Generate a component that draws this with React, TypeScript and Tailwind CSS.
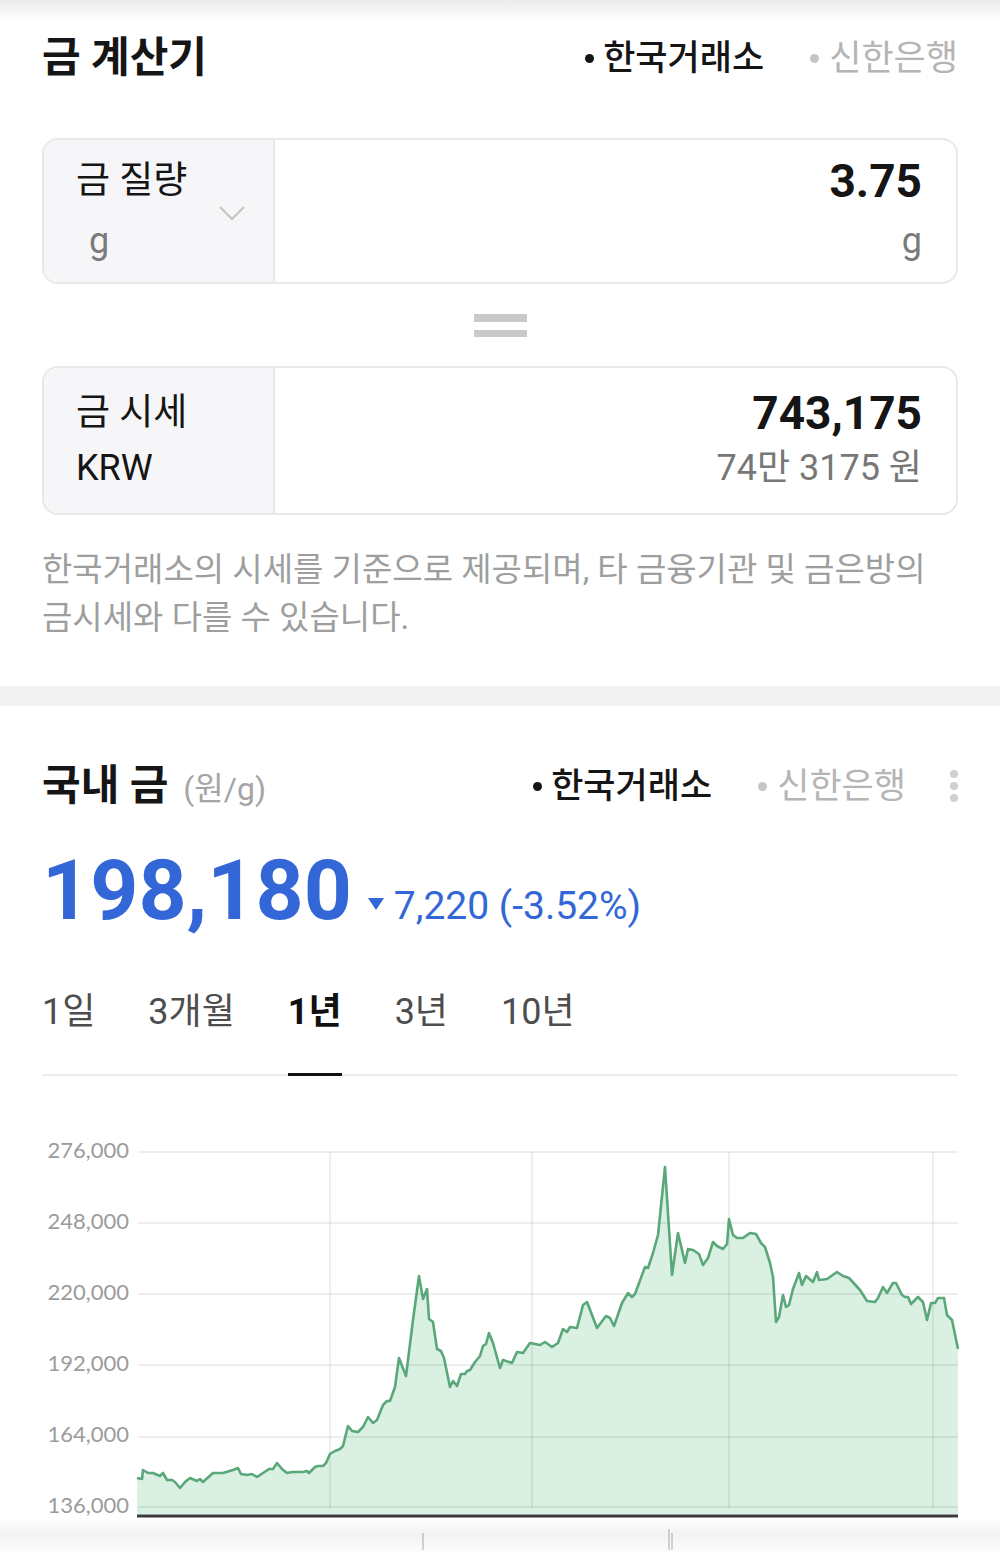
import React from 'react'

// price history, traced in page coordinates (x, y)
const pts: number[] = [
  137, 1478, 142, 1479, 143, 1470, 148, 1473, 153, 1473, 160, 1476, 163, 1473, 167, 1480, 172, 1480, 175, 1482,
  180, 1488, 185, 1482, 190, 1478, 197, 1481, 200, 1479, 203, 1482, 213, 1473, 217, 1473, 223, 1473, 233, 1470,
  238, 1468, 241, 1474, 247, 1475, 252, 1474, 257, 1477, 263, 1473, 269, 1469, 273, 1469, 277, 1463, 282, 1469,
  287, 1473, 292, 1472, 303, 1472, 307, 1471, 309, 1473, 315, 1467, 318, 1466, 323, 1466, 326, 1463, 330, 1454,
  335, 1451, 340, 1449, 343, 1446, 348, 1426, 352, 1431, 358, 1432, 363, 1427, 368, 1417, 373, 1423, 377, 1420,
  383, 1405, 387, 1401, 390, 1401, 395, 1387, 399, 1358, 406, 1376, 413, 1320, 419, 1276, 423, 1299, 427, 1289,
  429, 1319, 433, 1322, 437, 1349, 441, 1351, 444, 1358, 450, 1387, 453, 1381, 457, 1386, 461, 1374, 465, 1374,
  467, 1371, 470, 1370, 475, 1362, 480, 1356, 483, 1346, 486, 1344, 489, 1333, 493, 1343, 500, 1368, 503, 1360,
  512, 1363, 517, 1352, 523, 1353, 530, 1343, 540, 1345, 545, 1342, 552, 1347, 558, 1343, 563, 1329, 567, 1332,
  570, 1327, 577, 1328, 583, 1305, 587, 1302, 597, 1328, 606, 1316, 610, 1318, 614, 1326, 622, 1303, 628, 1293,
  632, 1297, 635, 1294, 645, 1267, 648, 1268, 653, 1253, 658, 1235, 665, 1167, 672, 1275, 678, 1233, 685, 1263,
  688, 1249, 693, 1250, 699, 1254, 703, 1265, 708, 1258, 713, 1242, 717, 1246, 723, 1249, 727, 1244, 729, 1219,
  733, 1235, 737, 1238, 743, 1238, 750, 1233, 756, 1234, 761, 1243, 765, 1247, 770, 1263, 773, 1277, 776, 1322,
  779, 1317, 783, 1295, 786, 1307, 789, 1305, 793, 1289, 799, 1273, 802, 1285, 806, 1276, 813, 1282, 817, 1272,
  819, 1280, 827, 1279, 837, 1272, 843, 1276, 849, 1278, 860, 1290, 867, 1301, 875, 1302, 878, 1298, 883, 1287,
  887, 1293, 893, 1283, 896, 1283, 902, 1295, 905, 1297, 908, 1297, 911, 1304, 918, 1297, 923, 1302, 927, 1320,
  931, 1303, 935, 1303, 938, 1298, 944, 1298, 947, 1315, 952, 1320, 958, 1349,
]

const line = pts.reduce((s, v, i) => s + (i % 2 === 0 ? (i === 0 ? 'M' : ' L') + v : ',' + v), '')
const area = `${line} L958,1514 L137,1514 Z`

const yLabels = [
  ['276,000', 1152],
  ['248,000', 1223],
  ['220,000', 1294],
  ['192,000', 1365],
  ['164,000', 1436],
  ['136,000', 1507],
] as const

const SourceToggle = () => (
  <div className="flex items-center gap-[46px] text-[35px] leading-none">
    <span className="flex items-center gap-[9px] font-medium text-[#151515]">
      <span className="w-[9px] h-[9px] rounded-full bg-[#151515]" />
      한국거래소
    </span>
    <span className="flex items-center gap-[10px] text-[#b5b5b5]">
      <span className="w-[9px] h-[9px] rounded-full bg-[#c6c6c6]" />
      신한은행
    </span>
  </div>
)

const GoldChart = () => (
  <svg width="1000" height="476" viewBox="0 1076 1000 476" className="block">
    <defs>
      <linearGradient id="bottomFade" x1="0" y1="0" x2="0" y2="1">
        <stop offset="0" stopColor="#ffffff" />
        <stop offset="0.45" stopColor="#f2f2f2" />
        <stop offset="1" stopColor="#fbfbfb" />
      </linearGradient>
    </defs>
    <rect x="0" y="1519" width="1000" height="33" fill="url(#bottomFade)" />
    {yLabels.map(([t, y]) => (
      <text
        key={t}
        x="129"
        y={y}
        textAnchor="end"
        dominantBaseline="middle"
        fontFamily="Lato, 'Open Sans', sans-serif"
        fontSize="22"
        fill="#9b9b9b"
      >
        {t}
      </text>
    ))}
    <path d={area} fill="#d9f0e3" />
    {[1152, 1223, 1294, 1365, 1437, 1507].map(y => (
      <line key={y} x1="138" x2="958" y1={y} y2={y} stroke="#000" strokeOpacity="0.09" strokeWidth="1.5" />
    ))}
    {[330, 532, 729, 933].map(x => (
      <line key={x} x1={x} x2={x} y1="1152" y2="1508" stroke="#000" strokeOpacity="0.09" strokeWidth="1.5" />
    ))}
    <path d={line} fill="none" stroke="#5aa87a" strokeWidth="2.6" strokeLinejoin="round" />
    <line x1="137" x2="958" y1="1516" y2="1516" stroke="#3a3a3a" strokeWidth="3" />
    <line x1="423" x2="423" y1="1533" y2="1550" stroke="#a8a8a8" strokeWidth="1" />
    <line x1="669" x2="669" y1="1529" y2="1550" stroke="#a8a8a8" strokeWidth="1" />
    <line x1="672" x2="672" y1="1533" y2="1550" stroke="#a8a8a8" strokeWidth="1" />
  </svg>
)

const tabs = ['1일', '3개월', '1년', '3년', '10년']

export default function App() {
  return (
    <div className="w-[1000px] h-[1552px] overflow-hidden bg-white text-[#151515] font-[Roboto,'Noto_Sans_CJK_KR',sans-serif]">
      <div className="h-[22px] bg-linear-to-b from-[#ebebeb] to-white" />

      {/* 금 계산기 */}
      <div className="px-[42px]">
        <div className="mt-[8px] h-[56px] flex items-center justify-between">
          <h1 className="text-[42px] font-bold leading-none">금 계산기</h1>
          <SourceToggle />
        </div>

        <div className="mt-[52px] h-[146px] flex rounded-[16px] border-2 border-[#e8e8ea] overflow-hidden">
          <div className="w-[231px] flex items-center justify-between pl-[32px] pr-[28px] bg-[#f6f6f8] border-r-2 border-[#e8e8ea]">
            <div className="flex flex-col gap-[16px]">
              <span className="text-[37px] leading-[44px]">금 질량</span>
              <span className="pl-[13px] text-[36px] leading-[44px] text-[#7a7a7a]">g</span>
            </div>
            <svg width="26" height="15" viewBox="0 0 26 15" className="mt-[4px]">
              <polyline points="1,1 13,13 25,1" fill="none" stroke="#c2c2c2" strokeWidth="2" />
            </svg>
          </div>
          <div className="flex-1 flex flex-col items-end justify-center gap-[16px] pr-[34px]">
            <span className="text-[46px] leading-[44px] font-bold">3.75</span>
            <span className="text-[36px] leading-[44px] text-[#7a7a7a]">g</span>
          </div>
        </div>

        <div className="h-[82px] flex flex-col items-center justify-center gap-[8px]">
          <div className="w-[53px] h-[8px] bg-[#c9c9c9]" />
          <div className="w-[53px] h-[7px] bg-[#c9c9c9]" />
        </div>

        <div className="h-[149px] flex rounded-[16px] border-2 border-[#e8e8ea] overflow-hidden">
          <div className="w-[231px] flex flex-col justify-center gap-[11px] pl-[32px] bg-[#f6f6f8] border-r-2 border-[#e8e8ea]">
            <span className="text-[37px] leading-[44px]">금 시세</span>
            <span className="text-[36px] leading-[44px]">KRW</span>
          </div>
          <div className="flex-1 flex flex-col items-end justify-center gap-[11px] pr-[34px]">
            <span className="text-[46px] leading-[44px] font-bold">743,175</span>
            <span className="text-[36px] leading-[44px] text-[#777]">74만 3175 원</span>
          </div>
        </div>

        <p className="mt-[31px] pb-[44px] text-[33px] leading-[48px] text-[#9e9e9e] whitespace-nowrap">
          한국거래소의 시세를 기준으로 제공되며, 타 금융기관 및 금은방의
          <br />
          금시세와 다를 수 있습니다.
        </p>
      </div>

      <div className="h-[20px] bg-[#f2f2f3]" />

      {/* 국내 금 */}
      <div className="px-[42px]">
        <div className="mt-[52px] h-[56px] flex items-center justify-between">
          <div className="flex items-baseline gap-[15px]">
            <h2 className="text-[42px] font-bold leading-none">국내 금</h2>
            <span className="text-[32px] leading-none text-[#a5a5a5]">(원/g)</span>
          </div>
          <div className="flex items-center gap-[44px]">
            <SourceToggle />
            <div className="flex flex-col gap-[4px]">
              <span className="w-[8px] h-[8px] rounded-full bg-[#cfcfcf]" />
              <span className="w-[8px] h-[8px] rounded-full bg-[#cfcfcf]" />
              <span className="w-[8px] h-[8px] rounded-full bg-[#cfcfcf]" />
            </div>
          </div>
        </div>

        <div className="mt-[35px] h-[84px] flex items-baseline text-[#3366d6]">
          <span className="text-[84px] leading-[84px] font-bold">198,180</span>
          <span className="ml-[16px] text-[39px] leading-none">
            <svg width="16" height="12" viewBox="0 0 16 12" className="inline-block mr-[10px] mb-[10px]">
              <polygon points="0,0 16,0 8,12" fill="#3366d6" />
            </svg>
            7,220 (-3.52%)
          </span>
        </div>

        <div className="mt-[57px] flex gap-[53px] border-b-2 border-[#ececec]">
          {tabs.map(t => (
            <span
              key={t}
              className={
                t === '1년'
                  ? 'pb-[39px] -mb-[2px] text-[36px] leading-[44px] font-bold text-[#111] border-b-[3px] border-[#111]'
                  : 'pb-[39px] -mb-[2px] text-[36px] leading-[44px] text-[#4d4d4d] border-b-[3px] border-transparent'
              }
            >
              {t}
            </span>
          ))}
        </div>
      </div>

      <GoldChart />
    </div>
  )
}
